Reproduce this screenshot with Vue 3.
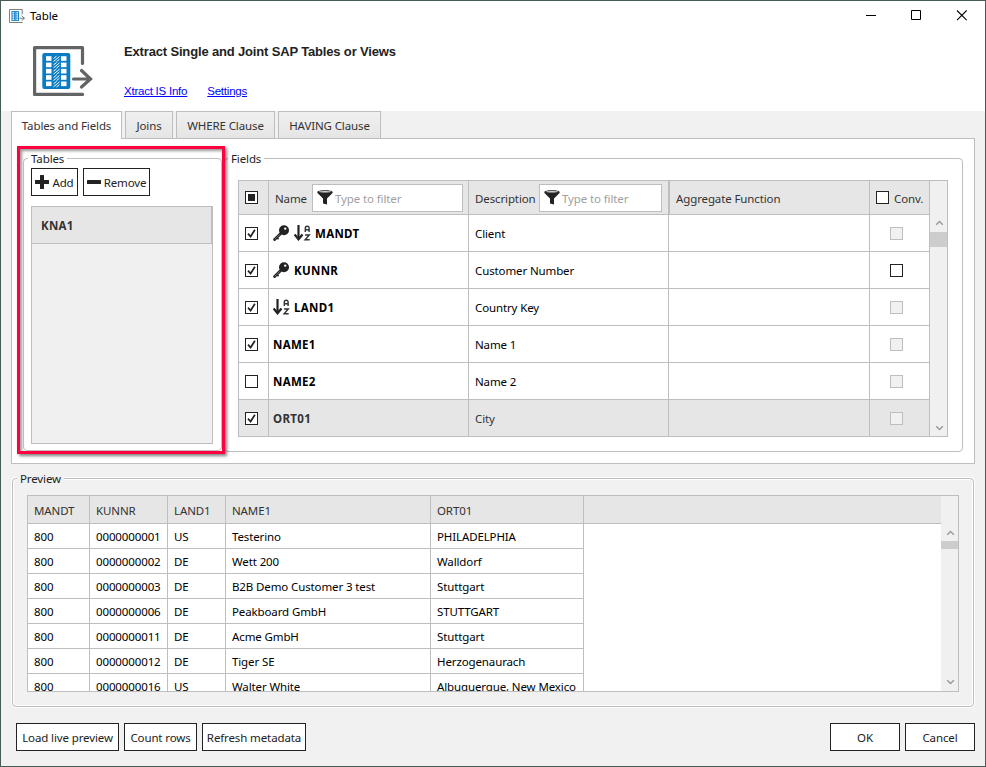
<script setup>
import { h } from 'vue'

const tabs = [
  { label: 'Tables and Fields', cls: 'tab-a' },
  { label: 'Joins', cls: 'tab-b' },
  { label: 'WHERE Clause', cls: 'tab-c' },
  { label: 'HAVING Clause', cls: 'tab-d' },
]

const fields = [
  { name: 'MANDT', desc: 'Client', checked: true, key: true, sort: true, conv: false },
  { name: 'KUNNR', desc: 'Customer Number', checked: true, key: true, sort: false, conv: true },
  { name: 'LAND1', desc: 'Country Key', checked: true, key: false, sort: true, conv: false },
  { name: 'NAME1', desc: 'Name 1', checked: true, key: false, sort: false, conv: false },
  { name: 'NAME2', desc: 'Name 2', checked: false, key: false, sort: false, conv: false },
  { name: 'ORT01', desc: 'City', checked: true, key: false, sort: false, conv: false, selected: true },
]

const previewColumns = ['MANDT', 'KUNNR', 'LAND1', 'NAME1', 'ORT01']
const previewRows = [
  ['800', '0000000001', 'US', 'Testerino', 'PHILADELPHIA'],
  ['800', '0000000002', 'DE', 'Wett 200', 'Walldorf'],
  ['800', '0000000003', 'DE', 'B2B Demo Customer 3 test', 'Stuttgart'],
  ['800', '0000000006', 'DE', 'Peakboard GmbH', 'STUTTGART'],
  ['800', '0000000011', 'DE', 'Acme GmbH', 'Stuttgart'],
  ['800', '0000000012', 'DE', 'Tiger SE', 'Herzogenaurach'],
  ['800', '0000000016', 'US', 'Walter White', 'Albuquerque, New Mexico'],
]

const FunnelIcon = () =>
  h('svg', { width: 16, height: 15, viewBox: '0 0 16 15' }, [
    h('path', { d: 'M.3 2.2C.3.9 4 .3 8 .3s7.700.600 7.700 1.900c0 .5-.3.8-.7 1.200L10 8.600v5.800L6 13.400V8.600L1 3.400C.6 3 .3 2.700.3 2.200z', fill: '#222' }),
    h('ellipse', { cx: 8, cy: 1.8, rx: 6.2, ry: 0.8, fill: '#d5d5d5' }),
  ])

const KeyIcon = () =>
  h('svg', { width: 17, height: 16, viewBox: '0 0 17 16' }, [
    h('circle', { cx: 11, cy: 5.2, r: 5, fill: '#222' }),
    h('circle', { cx: 12.2, cy: 3.6, r: 1.2, fill: '#fff' }),
    h('path', { d: 'M7.700 8.500L1.600 14.600', stroke: '#222', 'stroke-width': 2.8, 'stroke-linecap': 'round' }),
    h('path', { d: 'M6.800 9.300L1.800 14.300', stroke: '#bbb', 'stroke-width': 0.6 }),
    h('path', { d: 'M3.600 12.600l2 1.500', stroke: '#222', 'stroke-width': 1.6 }),
  ])

const SortIcon = () =>
  h('svg', { width: 17, height: 16, viewBox: '0 0 17 16', fill: 'none' }, [
    h('path', { d: 'M4.500 0v14.200', stroke: '#222', 'stroke-width': 2.2 }),
    h('path', { d: 'M.6 9.400l3.900 4.800 4-4.800', stroke: '#222', 'stroke-width': 2.3 }),
    h('path', { d: 'M11.300 7V3.200q0-1.900 1.900-1.900t1.900 1.900V7M11.300 4.700h3.800M11.100 10h4.200l-4.200 4.800h4.600', stroke: '#333', 'stroke-width': 1.4 }),
  ])

const UpArrow = () =>
  h('svg', { width: 9, height: 6, viewBox: '0 0 9 6' }, [
    h('path', { d: 'M1.200 4.800L4.500 1.500l3.300 3.300', fill: 'none', stroke: '#999', 'stroke-width': 1.4 }),
  ])

const DownArrow = () =>
  h('svg', { width: 9, height: 6, viewBox: '0 0 9 6' }, [
    h('path', { d: 'M1.200 1.200L4.500 4.500l3.300-3.300', fill: 'none', stroke: '#999', 'stroke-width': 1.4 }),
  ])

const TableLogo = (props) =>
  h('svg', { width: props.w, height: props.h, viewBox: '0 0 60 50', fill: 'none', preserveAspectRatio: 'none' }, [
    h('path', { d: 'M49.500 17.500V1.600H1.600v46.800h48', stroke: '#636466', 'stroke-width': 3.2, 'stroke-linejoin': 'round', 'stroke-linecap': 'round' }),
    h('path', { d: 'M40.500 33H57M48.500 24.500L57.500 33L48.500 41', stroke: '#636466', 'stroke-width': 3.2, 'stroke-linecap': 'round' }),
    h('rect', { x: 9.300, y: 7, width: 28, height: 36, rx: 2, fill: '#0b7cc4' }),
    ...[10.2, 16.6, 22.900, 29.2, 35.5].flatMap((y) => [
      h('rect', { x: 13, y, width: 5.500, height: 4.600, fill: '#fff' }),
      h('rect', { x: 28, y, width: 5.500, height: 4.600, fill: '#fff' }),
      h('path', { d: `M20.500 ${y + 2.300}l3-2.300M20.500 ${y + 5.300}l6-5M23.500 ${y + 5.500}l3-2.500`, stroke: '#fff', 'stroke-width': 1 }),
    ]),
  ])
TableLogo.props = ['w', 'h']
</script>

<template>
  <div class="window">
    <header class="top">
      <div class="titlebar">
        <TableLogo :w="16" :h="14" />
        <span class="caption">Table</span>
        <svg class="controls" width="101" height="11" viewBox="0 0 101 11" fill="none" stroke="#000">
          <path d="M0 5.500h10M45.500.5h9v9h-9z" />
          <path d="M91 .5l9.700 9.700M100.700.5L91 10.200" stroke-width="1.100" />
        </svg>
      </div>
      <div class="banner">
        <TableLogo class="logo" :w="60" :h="50" />
        <div class="intro">
          <h1>Extract Single and Joint SAP Tables or Views</h1>
          <nav><a>Xtract IS Info</a><a>Settings</a></nav>
        </div>
      </div>
    </header>

    <div class="tabs">
      <div v-for="(t, i) in tabs" :key="t.label" class="tab" :class="[t.cls, { active: i === 0 }]">{{ t.label }}</div>
    </div>

    <main class="panel">
      <div class="highlight">
        <fieldset class="group tables">
          <legend>Tables</legend>
          <div class="tools">
            <button class="btn add">
              <svg width="14" height="14" viewBox="0 0 14 14"><path d="M5 .5q0-.5.5-.5h3q.5 0 .5.500V5h4.500q.5 0 .5.500v3q0 .5-.5.500H9v4.500q0 .5-.5.500h-3q-.5 0-.5-.5V9H.5Q0 9 0 8.500v-3Q0 5 .5 5H5z" fill="#222" /></svg>
              <span>Add</span>
            </button>
            <button class="btn remove">
              <svg width="14" height="14" viewBox="0 0 14 14"><rect y="5" width="14" height="4" rx=".6" fill="#222" /></svg>
              <span>Remove</span>
            </button>
          </div>
          <div class="list"><div class="item">KNA1</div></div>
        </fieldset>
      </div>

      <fieldset class="group fields">
        <legend>Fields</legend>
        <div class="grid">
          <div class="grid-body">
            <div class="row head">
              <div class="cell c-check"><span class="box some"></span></div>
              <div class="cell c-name"><span class="label">Name</span><div class="filter"><FunnelIcon /><span class="label">Type to filter</span></div></div>
              <div class="cell c-desc"><span class="label">Description</span><div class="filter"><FunnelIcon /><span class="label">Type to filter</span></div></div>
              <div class="cell c-agg"><span class="label">Aggregate Function</span></div>
              <div class="cell c-conv"><span class="box"></span><span class="label">Conv.</span></div>
            </div>
            <div v-for="f in fields" :key="f.name" class="row" :class="{ selected: f.selected }">
              <div class="cell c-check">
                <span class="box">
                  <svg v-if="f.checked" width="11" height="11" viewBox="0 0 11 11"><path d="M2 5.600l2.600 2.900 4.300-6.700" fill="none" stroke="#222" stroke-width="1.700" /></svg>
                </span>
              </div>
              <div class="cell c-name strong">
                <KeyIcon v-if="f.key" /><SortIcon v-if="f.sort" /><span class="label">{{ f.name }}</span>
              </div>
              <div class="cell c-desc"><span class="label">{{ f.desc }}</span></div>
              <div class="cell c-agg"></div>
              <div class="cell c-conv"><span class="box" :class="{ off: !f.conv }"></span></div>
            </div>
          </div>
          <div class="scroll"><UpArrow /><i class="thumb"></i><span class="grow"></span><DownArrow /></div>
        </div>
      </fieldset>
    </main>

    <fieldset class="group preview">
      <legend>Preview</legend>
      <div class="pgrid">
        <div class="pbody">
          <div class="prow phead">
            <div v-for="c in previewColumns" :key="c" class="pcell">{{ c }}</div>
          </div>
          <div v-for="r in previewRows" :key="r[1]" class="prow">
            <div v-for="(v, i) in r" :key="i" class="pcell">{{ v }}</div>
          </div>
        </div>
        <div class="scroll small"><UpArrow /><i class="thumb"></i><span class="grow"></span><DownArrow /></div>
      </div>
    </fieldset>

    <footer class="actions">
      <button class="btn load"><span>Load live preview</span></button>
      <button class="btn count"><span>Count rows</span></button>
      <button class="btn refresh"><span>Refresh metadata</span></button>
      <span class="grow"></span>
      <button class="btn ok"><span>OK</span></button>
      <button class="btn ok"><span>Cancel</span></button>
    </footer>
  </div>
</template>

<style>
body { margin: 0; overflow: hidden; }
</style>

<style scoped>
* { box-sizing: border-box; }
svg { display: block; flex: none; }
.window {
  width: 986px; height: 767px; border: 1px solid #455c57; background: #f1f1f1;
  font: 11.5px/16px "Noto Sans", sans-serif; letter-spacing: -0.12px; color: #222;
  display: flex; flex-direction: column; white-space: nowrap;
}
.grow { flex: 1; }
.top { height: 110px; background: #fff; flex: none; }
.titlebar { height: 29px; display: flex; align-items: center; padding: 0 18px 0 8px; color: #000; }
.caption { margin-left: 5px; flex: 1; }
.banner { display: flex; padding: 16px 0 0 32px; }
.intro { margin-left: 31px; }
h1 { margin: -2px 0 0; font: bold 13px/16px "Liberation Sans", sans-serif; letter-spacing: -0.16px; }
nav { display: flex; gap: 20px; margin-top: 23px; font: 11.5px/16px "Liberation Sans", sans-serif; letter-spacing: -0.23px; }
nav a { color: #00f; text-decoration: underline; }

.tabs { display: flex; gap: 3px; padding-left: 10px; height: 27px; flex: none; }
.tab {
  height: 27px; border: 1px solid #bebebe; border-bottom: 0; color: #333;
  background: linear-gradient(#f0f0f0, #e5e5e5); text-align: center; line-height: 28px;
}
.tab.active { background: #fff; height: 28px; z-index: 1; }
.tab-a { width: 111px; }
.tab-b { width: 48px; }
.tab-c { width: 99px; }
.tab-d { width: 103px; }

.panel {
  flex: none; height: 326px; width: 964px; margin-left: 10px; border: 1px solid #bebebe;
  background: #fff; display: flex; padding: 7px 11px 0 5px;
}
.highlight {
  width: 208px; height: 308px; border: 3px solid #ff0040; padding: 1px 0 0 3px; z-index: 1;
  box-shadow: 2px 2px 3px rgba(0, 0, 0, .5), inset 2px 2px 3px rgba(0, 0, 0, .4);
}
.group { margin: 0; min-width: 0; border: 1px solid #bebebe; border-radius: 4px; }
legend { padding: 0 3px; height: 16px; line-height: 18px; }
.tables { width: 199px; height: 301px; padding: 2px 7px 0 7px; }
.tables legend { margin-left: -3px; }
.tools { display: flex; gap: 5px; }
.btn {
  font: inherit; letter-spacing: inherit; color: #222; background: #fff; border: 1px solid #222;
  height: 28px; padding: 0; display: flex; align-items: center; justify-content: center; gap: 3px;
}
.btn span { padding-top: 2px; }
.add { width: 47px; }
.remove { width: 67px; }
.list { margin-top: 10px; width: 182px; height: 238px; border: 1px solid #bebebe; background: #f0f0f0; }
.item {
  height: 37px; background: #e6e6e6; border-right: 1px solid #bebebe; border-bottom: 1px solid #bebebe;
  font-weight: bold; letter-spacing: .3px; line-height: 37px; padding-left: 9px; color: #333;
}

.fields { flex: 1; height: 302px; margin: 4px 0 0 -1px; padding: 14px 0 0 13px; }
.fields legend { margin-left: -10px; }
.grid { width: 710px; height: 257px; border: 1px solid #bebebe; display: flex; background: #fff; }
.grid-body { flex: 1; }
.row { display: grid; grid-template-columns: 30px 200px 200px 201px 60px; height: 37px; color: #000; }
.row.head { height: 34px; background: #e6e6e6; color: #333; }
.row.selected { background: #e6e6e6; color: #333; }
.cell {
  display: flex; align-items: center; border-right: 1px solid #bebebe; border-bottom: 1px solid #bebebe;
  padding-left: 6px;
}
.label { padding-top: 2px; }
.row:last-child { height: 36px; }
.row:last-child .cell { border-bottom: 0; }
.row .c-name { padding-left: 4px; gap: 4px; }
.strong { font-weight: bold; letter-spacing: .32px; }
.head .c-name { padding: 0 5px 0 6px; }
.head .c-desc { padding-right: 6px; box-shadow: 1px 0 0 #bebebe; }
.c-agg { padding-left: 7px; }
.c-conv { padding-left: 20px; }
.head .c-conv { padding-left: 6px; gap: 5px; }
.filter {
  height: 28px; border: 1px solid #bebebe; background: #fff; display: flex; align-items: center;
  gap: 2px; padding-left: 4px; color: #a0a0a0; margin-left: auto; flex: none;
}
.c-name .filter { width: 151px; }
.c-desc .filter { width: 123px; }
.box { width: 13px; height: 13px; border: 1px solid #222; background: #fff; flex: none; }
.box.off { border-color: #bebebe; background: #f1f1f1; }
.box.some { padding: 2px; background: #222 content-box; box-shadow: inset 0 0 0 2px #fff; }

.scroll { width: 17px; background: #f0f0f0; display: flex; flex-direction: column; align-items: center; padding: 39px 0 5px; }
.scroll svg { margin-left: 1px; }
.thumb { width: 17px; height: 15px; background: #cdcdcd; margin-top: 6px; }
.scroll.small { padding: 34px 0 6px; }
.small .thumb { height: 8px; margin-top: 5px; }

.preview {
  flex: none; margin: 6px 0 0 11px; width: 962px; height: 237px; padding: 9px 0 0 14px;
  box-shadow: 0 0 0 1px #fff, inset 0 0 0 1px #fff;
}
.preview legend { margin-left: -10px; background: #f1f1f1; }
.pgrid { width: 932px; height: 197px; border: 1px solid #bebebe; background: #fff; display: flex; }
.pbody { width: 913px; overflow: hidden; }
.prow { display: grid; grid-template-columns: 62px 78px 58px 205px 153px; height: 25px; color: #000; }
.phead { height: 28px; background: #e6e6e6; color: #333; border-bottom: 1px solid #bebebe; }
.pcell { border-right: 1px solid #bebebe; border-bottom: 1px solid #bebebe; padding-left: 6px; line-height: 26px; overflow: hidden; }
.phead .pcell { border-bottom: 0; line-height: 29px; }

.actions { display: flex; gap: 5px; padding: 16px 10px 0 15px; }
.load { width: 103px; }
.count { width: 73px; }
.refresh { width: 104px; }
.ok { width: 70px; }
</style>
